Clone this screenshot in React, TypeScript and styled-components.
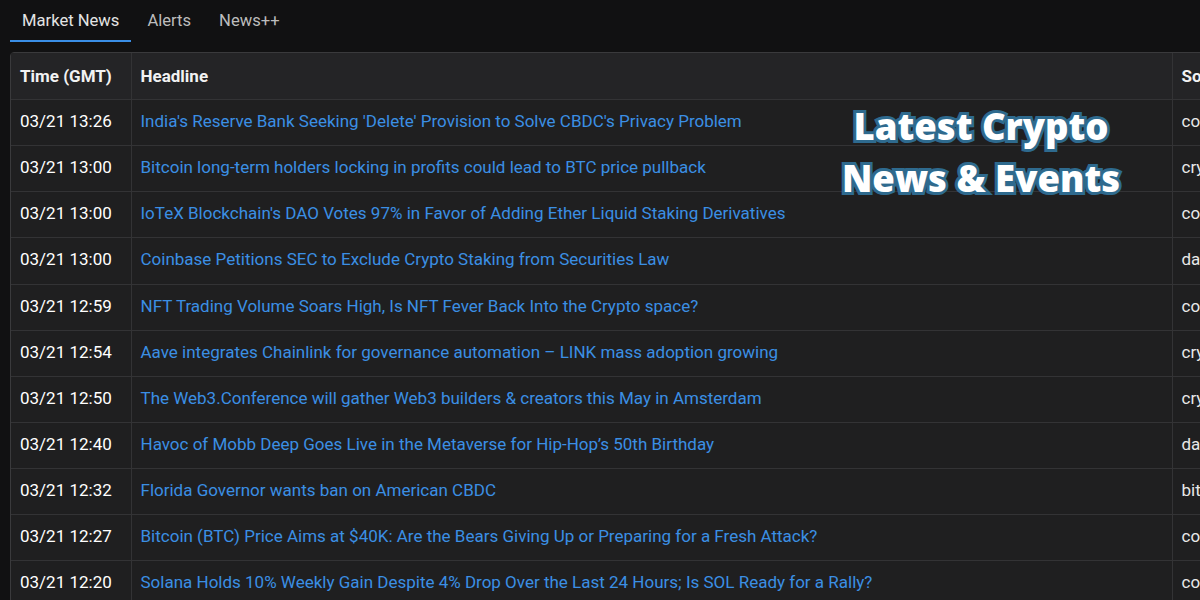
import React from 'react';
import styled, { createGlobalStyle } from 'styled-components';

const GlobalStyle = createGlobalStyle`
    html, body {
        margin: 0;
        padding: 0;
        background: #111112;
        font-family: Roboto, "Liberation Sans", sans-serif;
        overflow: hidden;
    }
`;

const news = [
    { time: '03/21 13:26', headline: "India's Reserve Bank Seeking 'Delete' Provision to Solve CBDC's Privacy Problem", source: 'cointelegraph' },
    { time: '03/21 13:00', headline: 'Bitcoin long-term holders locking in profits could lead to BTC price pullback', source: 'crypto.news' },
    { time: '03/21 13:00', headline: "IoTeX Blockchain's DAO Votes 97% in Favor of Adding Ether Liquid Staking Derivatives", source: 'coindesk' },
    { time: '03/21 13:00', headline: 'Coinbase Petitions SEC to Exclude Crypto Staking from Securities Law', source: 'dailyhodl' },
    { time: '03/21 12:59', headline: 'NFT Trading Volume Soars High, Is NFT Fever Back Into the Crypto space?', source: 'coinpedia' },
    { time: '03/21 12:54', headline: 'Aave integrates Chainlink for governance automation – LINK mass adoption growing', source: 'crypto.news' },
    { time: '03/21 12:50', headline: 'The Web3.Conference will gather Web3 builders & creators this May in Amsterdam', source: 'cryptoslate' },
    { time: '03/21 12:40', headline: 'Havoc of Mobb Deep Goes Live in the Metaverse for Hip-Hop’s 50th Birthday', source: 'dailyhodl' },
    { time: '03/21 12:32', headline: 'Florida Governor wants ban on American CBDC', source: 'bitcoinist' },
    { time: '03/21 12:27', headline: 'Bitcoin (BTC) Price Aims at $40K: Are the Bears Giving Up or Preparing for a Fresh Attack?', source: 'coinpedia' },
    { time: '03/21 12:20', headline: 'Solana Holds 10% Weekly Gain Despite 4% Drop Over the Last 24 Hours; Is SOL Ready for a Rally?', source: 'coingape' },
];

export default function App() {
    return (
        <>
            <GlobalStyle />
            <Page>
                <TabBar>
                    <Tab active>Market News</Tab>
                    <Tab>Alerts</Tab>
                    <Tab>News++</Tab>
                </TabBar>
                <TableWrapper>
                    <NewsTable>
                        <colgroup>
                            <col style={{ width: 120 }} />
                            <col style={{ width: 1041 }} />
                            <col style={{ width: 160 }} />
                        </colgroup>
                        <thead>
                            <tr>
                                <HeadCell>Time (GMT)</HeadCell>
                                <HeadCell>Headline</HeadCell>
                                <HeadCell>Source</HeadCell>
                            </tr>
                        </thead>
                        <tbody>
                            {news.map((n, i) => (
                                <tr key={i}>
                                    <TimeCell>{n.time}</TimeCell>
                                    <HeadlineCell>
                                        <a href="#">{n.headline}</a>
                                    </HeadlineCell>
                                    <SourceCell>{n.source}</SourceCell>
                                </tr>
                            ))}
                        </tbody>
                    </NewsTable>
                    <Banner>
                        Latest Crypto
                        <br />
                        News &amp; Events
                    </Banner>
                </TableWrapper>
            </Page>
        </>
    );
}

const Page = styled.div`
    width: 1200px;
    height: 600px;
    overflow: hidden;
    padding: 0 0 0 10px;
    box-sizing: border-box;
`;

const TabBar = styled.div`
    display: flex;
    gap: 4px;
    height: 42px;
    margin-bottom: 10px;
`;

const Tab = styled.div<{ active?: boolean }>`
    padding: 0 12px;
    height: 42px;
    line-height: 42px;
    font-size: 16.6px;
    color: ${(p) => (p.active ? '#e4e4e4' : '#bdbdbd')};
    border-bottom: 2px solid ${(p) => (p.active ? '#3a8ee6' : 'transparent')};
    box-sizing: border-box;
`;

const TableWrapper = styled.div`
    position: relative;
    width: 1330px;
    border: 1px solid #3a3a3c;
    border-radius: 4px;
    background: #1f1f20;
`;

const NewsTable = styled.table`
    table-layout: fixed;
    border-collapse: collapse;
    width: 1321px;
    font-size: 17px;
    color: #f2f2f2;

    td,
    th {
        border-right: 1px solid #333335;
        border-bottom: 1px solid #333335;
        padding: 0 9px;
        text-align: left;
        white-space: nowrap;
        overflow: hidden;
    }

    td {
        padding-bottom: 3px;
    }
`;

const HeadCell = styled.th`
    height: 46px;
    font-weight: 700;
    background: #242426;
`;

const TimeCell = styled.td`
    height: 42.15px;
    font-weight: 400;
    color: #ffffff;
`;

const HeadlineCell = styled.td`
    a {
        color: #3b8fe4;
        text-decoration: none;
    }
`;

const SourceCell = styled.td`
    color: #e8e8e8;
`;

const Banner = styled.div`
    position: absolute;
    top: 47px;
    left: 800px;
    width: 340px;
    text-align: center;
    font-family: "Open Sans", "Noto Sans", sans-serif;
    font-weight: 800;
    font-size: 36.5px;
    line-height: 52px;
    color: #ffffff;
    -webkit-text-stroke: 6px #2e6a8e;
    paint-order: stroke fill;
`;
